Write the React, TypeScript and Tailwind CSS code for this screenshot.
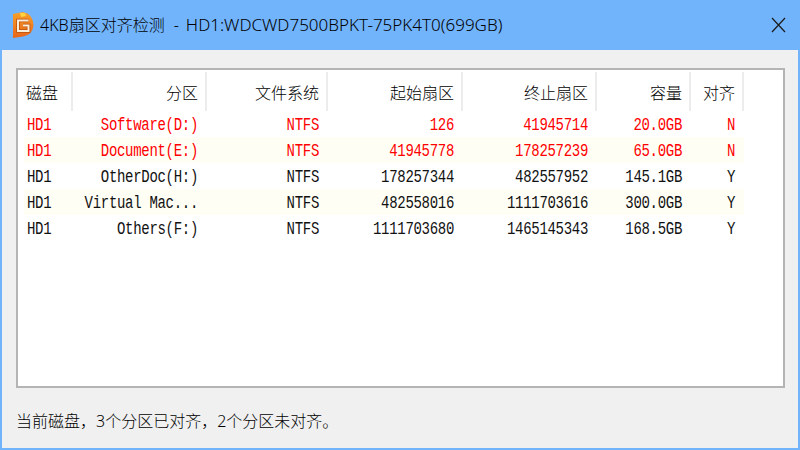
const cols = "grid grid-cols-[49px_134px_121px_135px_134px_94px_53px] w-[720px]";

const headers = ["磁盘", "分区", "文件系统", "起始扇区", "终止扇区", "容量", "对齐"];

const rows = [
  ["HD1", "Software(D:)", "NTFS", "126", "41945714", "20.0GB", "N"],
  ["HD1", "Document(E:)", "NTFS", "41945778", "178257239", "65.0GB", "N"],
  ["HD1", "OtherDoc(H:)", "NTFS", "178257344", "482557952", "145.1GB", "Y"],
  ["HD1", "Virtual Mac...", "NTFS", "482558016", "1111703616", "300.0GB", "Y"],
  ["HD1", "Others(F:)", "NTFS", "1111703680", "1465145343", "168.5GB", "Y"],
];

function AppIcon() {
  return (
    <svg width="21" height="26" viewBox="0 0 21 26" className="shrink-0">
      <defs>
        <linearGradient id="logo" x1="0" y1="0" x2="0" y2="1">
          <stop offset="0" stopColor="#f7a12a" />
          <stop offset="1" stopColor="#e8641a" />
        </linearGradient>
      </defs>
      <path d="M0 2 L10 0 Q20 2 20.500 13 Q20 23 10 24.500 L0 26 Z" fill="url(#logo)" />
      <path d="M7 1 L12 1 L13 4 L8 5 Z" fill="#ffd23f" />
      <path d="M15.500 8.500 H5 V19 H15.500 V13.500 H10" fill="none" stroke="#b8500f" strokeWidth="3.600" />
      <path d="M15.500 8.500 H5 V19 H15.500 V13.500 H10" fill="none" stroke="#fdeed8" strokeWidth="2" />
    </svg>
  );
}

export default function App() {
  return (
    <div className="w-[800px] h-[450px] flex flex-col bg-[#72b4fb] overflow-hidden font-['Noto_Sans','Noto_Sans_CJK_SC',sans-serif] font-light text-black">
      <div className="h-[50px] shrink-0 flex items-center pl-[13px] pr-[14px]">
        <AppIcon />
        <span className="ml-[6px] text-[16px] text-black whitespace-nowrap">4KB扇区对齐检测</span>
        <span className="ml-[9px] text-[16px] text-black">-</span>
        <span className="ml-[7px] text-[17px] text-black whitespace-nowrap">HD1:WDCWD7500BPKT-75PK4T0(699GB)</span>
        <svg width="15" height="16" viewBox="0 0 15 16" className="ml-auto">
          <path d="M1 1 L14 15 M14 1 L1 15" stroke="#1a1a1a" strokeWidth="1.200" fill="none" />
        </svg>
      </div>
      <div className="flex-1 mx-[2px] mb-[2px] bg-[#f0f0f0] flex flex-col pt-[18px] pl-[14px] pr-[13px]">
        <div className="h-[320px] bg-white border-2 border-[#b4b4b4] pl-[6px] pt-[2px]">
          <div className={`${cols} h-[39px]`}>
            {headers.map((h, i) => (
              <div
                key={h}
                className={`flex items-center border-r-2 border-[#ececec] text-[16px] text-black pt-[2px] ${i === 0 ? "justify-start pl-[2px]" : "justify-end pr-[7px]"}`}
              >
                {h}
              </div>
            ))}
          </div>
          {rows.map((row, r) => (
            <div key={r} className={`${cols} h-[26px] ${r % 2 === 1 ? "bg-[#fffef5]" : ""} ${r < 2 ? "text-[#ff0000]" : "text-[#111]"}`}>
              {row.map((cell, i) => (
                <div
                  key={i}
                  className={`flex items-center font-['Liberation_Mono',monospace] font-normal text-[14px] tracking-[-0.300px] whitespace-pre ${i === 0 ? "justify-start pl-[3px]" : "justify-end pr-[9px]"}`}
                >
                  <span className="inline-block scale-y-[1.25] translate-y-[1px]">{cell}</span>
                </div>
              ))}
            </div>
          ))}
        </div>
        <div className="flex-1 flex items-center text-[16px] text-black pt-[5px]">
          当前磁盘，3个分区已对齐，2个分区未对齐。
        </div>
      </div>
    </div>
  );
}
